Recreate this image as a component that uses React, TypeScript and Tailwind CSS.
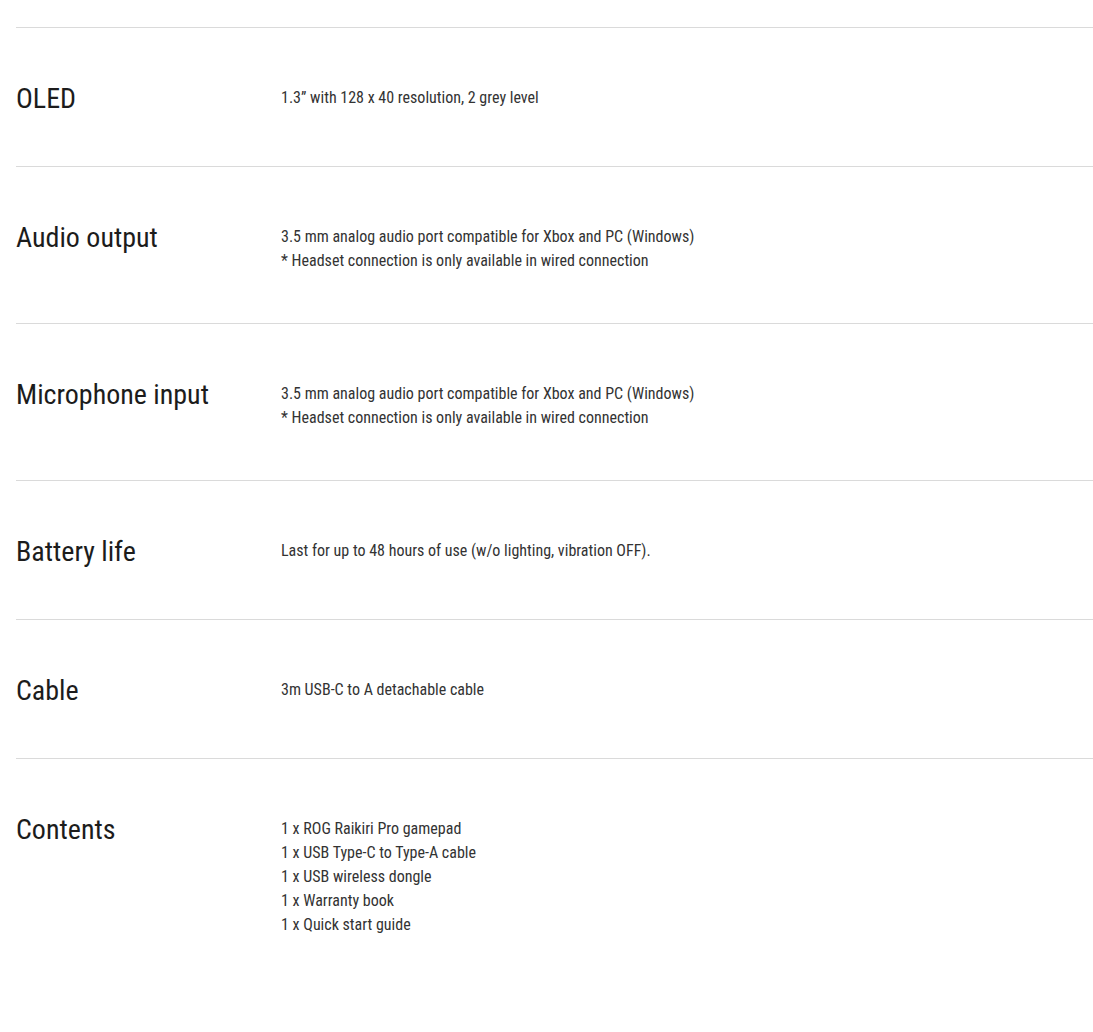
const specs: { label: string; lines: string[] }[] = [
  { label: "OLED", lines: ["1.3” with 128 x 40 resolution, 2 grey level"] },
  {
    label: "Audio output",
    lines: [
      "3.5 mm analog audio port compatible for Xbox and PC (Windows)",
      "* Headset connection is only available in wired connection",
    ],
  },
  {
    label: "Microphone input",
    lines: [
      "3.5 mm analog audio port compatible for Xbox and PC (Windows)",
      "* Headset connection is only available in wired connection",
    ],
  },
  {
    label: "Battery life",
    lines: ["Last for up to 48 hours of use (w/o lighting, vibration OFF)."],
  },
  { label: "Cable", lines: ["3m USB-C to A detachable cable"] },
  {
    label: "Contents",
    lines: [
      "1 x ROG Raikiri Pro gamepad",
      "1 x USB Type-C to Type-A cable",
      "1 x USB wireless dongle",
      "1 x Warranty book",
      "1 x Quick start guide",
    ],
  },
];

const SpecRow = ({ label, lines }: { label: string; lines: string[] }) => {
  return (
    <div className="flex items-start border-t border-[#dadada] pt-[54px] pb-[50px]">
      <div className="w-[265px] shrink-0 text-[28px] leading-[34px] text-[#1c1c1c]">
        {label}
      </div>
      <div className="mt-[4px] text-[16px] leading-[24px] text-[#333333]">
        {lines.map((l, i) => (
          <p key={i}>{l}</p>
        ))}
      </div>
    </div>
  );
};

export default function App() {
  return (
    <div
      className="min-h-screen bg-white pt-[27px] pl-4"
      style={{ fontFamily: '"Roboto Condensed", Roboto, "Liberation Sans", sans-serif', fontStretch: "condensed" }}
    >
      {specs.map((s) => (
        <SpecRow key={s.label} label={s.label} lines={s.lines} />
      ))}
    </div>
  );
}
